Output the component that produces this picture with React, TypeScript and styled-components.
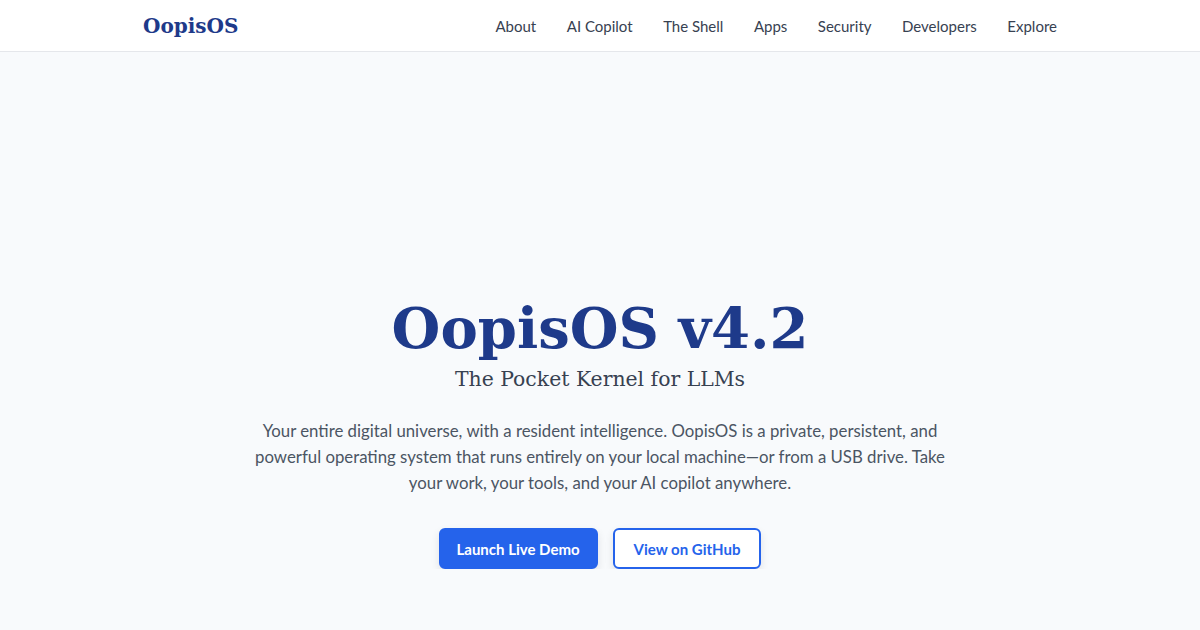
import styled, { createGlobalStyle } from "styled-components";

const GlobalStyle = createGlobalStyle`
    body {
        margin: 0;
        background-color: #f8fafc;
        font-family: Lato, "Noto Sans", sans-serif;
        color: #374151;
    }
`;

const serif = `"DejaVu Serif", "Liberation Serif", serif`;

const Header = styled.header`
    height: 52px;
    background-color: #ffffff;
    border-bottom: 1px solid #e5e7eb;
    box-sizing: border-box;
`;

const HeaderInner = styled.div`
    max-width: 914px;
    height: 100%;
    margin: 0 auto;
    display: flex;
    align-items: center;
    justify-content: space-between;
`;

const Logo = styled.a`
    font-family: ${serif};
    font-weight: 700;
    font-size: 20px;
    color: #1e3a8a;
    text-decoration: none;
`;

const Nav = styled.nav`
    display: flex;
    gap: 30.5px;
`;

const NavLink = styled.a`
    font-size: 15px;
    color: #374151;
    text-decoration: none;
`;

const Hero = styled.section`
    display: flex;
    flex-direction: column;
    align-items: center;
    text-align: center;
    padding-top: 248px;
`;

const Title = styled.h1`
    margin: 0;
    font-family: ${serif};
    font-weight: 700;
    font-size: 56px;
    line-height: 1;
    color: #1e3a8a;
`;

const Subtitle = styled.h2`
    margin: 8px 0 0;
    font-family: ${serif};
    font-weight: 400;
    font-size: 20.4px;
    line-height: 30px;
    color: #374151;
`;

const Lead = styled.p`
    margin: 24px 0 0;
    max-width: 700px;
    font-size: 16.8px;
    line-height: 26px;
    color: #4b5563;
`;

const Actions = styled.div`
    display: flex;
    gap: 15px;
    margin-top: 32px;
`;

const Button = styled.a<{ $variant: "solid" | "outline" }>`
    display: inline-flex;
    align-items: center;
    justify-content: center;
    height: 41px;
    padding: 0 ${(p) => (p.$variant === "solid" ? "16px" : "19px")};
    box-sizing: border-box;
    border-radius: 6px;
    font-size: 15px;
    font-weight: 700;
    text-decoration: none;
    box-shadow: 0 4px 8px rgba(15, 23, 42, 0.1);
    border: 2px solid #2563eb;
    background-color: ${(p) => (p.$variant === "solid" ? "#2563eb" : "#ffffff")};
    color: ${(p) => (p.$variant === "solid" ? "#ffffff" : "#2563eb")};
`;

const links = ["About", "AI Copilot", "The Shell", "Apps", "Security", "Developers", "Explore"];

export default function App() {
    return (
        <>
            <GlobalStyle />
            <Header>
                <HeaderInner>
                    <Logo href="#">OopisOS</Logo>
                    <Nav>
                        {links.map((l) => (
                            <NavLink key={l} href="#">{l}</NavLink>
                        ))}
                    </Nav>
                </HeaderInner>
            </Header>
            <Hero>
                <Title>OopisOS v4.2</Title>
                <Subtitle>The Pocket Kernel for LLMs</Subtitle>
                <Lead>
                    Your entire digital universe, with a resident intelligence. OopisOS is a private,
                    persistent, and powerful operating system that runs entirely on your local
                    machine—or from a USB drive. Take your work, your tools, and your AI copilot
                    anywhere.
                </Lead>
                <Actions>
                    <Button $variant="solid" href="#">Launch Live Demo</Button>
                    <Button $variant="outline" href="#">View on GitHub</Button>
                </Actions>
            </Hero>
        </>
    );
}
